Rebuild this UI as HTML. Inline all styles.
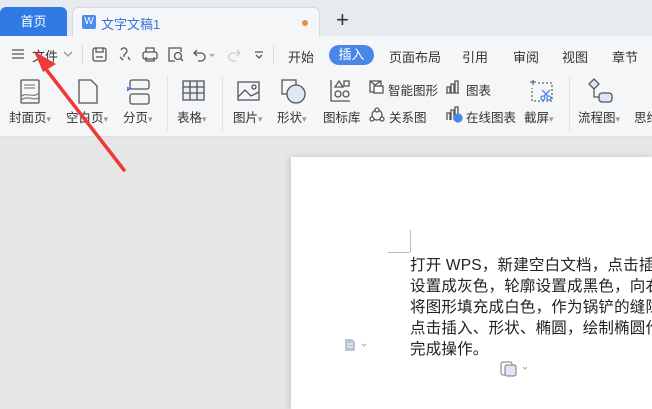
<!DOCTYPE html>
<html><head><meta charset="utf-8"><style>
*{margin:0;padding:0;box-sizing:border-box}
body{width:652px;height:409px;overflow:hidden;background:#e6e6e6;font-family:"Liberation Sans","Noto Sans CJK SC",sans-serif;position:relative;font-size:12px;color:#333}
.abs{position:absolute}
#tabs{left:0;top:0;width:652px;height:36px;background:#e7eaee}
#home{left:0;top:7px;width:67px;height:29px;background:#2f7ae5;color:#fff;border-radius:6px 6px 0 0;text-align:center;line-height:29px;font-size:13px}
#doc{left:72px;top:7px;width:248px;height:30px;background:#f5f6f8;border:1px solid #d6d9de;border-bottom:none;border-radius:6px 6px 0 0}
#tool{left:0;top:36px;width:652px;height:101px;background:#f5f6f8;border-bottom:1px solid #e0e0e0}
.t{position:absolute;white-space:nowrap}
.ic{position:absolute;fill:none;stroke-width:1.3}
#page{left:291px;top:157px;width:361px;height:252px;background:#fff;box-shadow:-2px 0 6px rgba(0,0,0,.12)}
.line{position:absolute;left:410px;font-size:15.5px;color:#222;white-space:nowrap;letter-spacing:0.2px}
</style></head><body>
<div id="tabs" class="abs"></div>
<div id="home" class="abs">首页</div>
<div id="doc" class="abs">
 <div class="abs" style="left:9px;top:7px;width:14px;height:14px;background:#4a8cf0;border-radius:2px;color:#fff;font-size:10px;text-align:center;line-height:14px">W</div>
 <div class="t" style="left:28px;top:6px;font-size:13px;color:#3a72d8">文字文稿1</div>
 <div class="abs" style="left:229px;top:12px;width:6px;height:6px;border-radius:50%;background:#e8903e"></div>
</div>
<div class="t" style="left:336px;top:7px;font-size:22px;color:#333;font-weight:300">+</div>
<div id="tool" class="abs"></div>
<!-- row 1 -->
<svg class="ic" style="left:11px;top:48px;stroke:#555" width="14" height="12"><path d="M1 2H13M1 6H13M1 10H13"/></svg>
<div class="t" style="left:32px;top:46px;font-size:13px">文件</div>
<svg class="ic" style="left:63px;top:50px;stroke:#999" width="10" height="8"><path d="M1 2L5 6L9 2"/></svg>
<div class="abs" style="left:82px;top:45px;width:1px;height:20px;background:#ddd"></div>
<svg class="ic" style="left:92px;top:47px;stroke:#555" width="15" height="15"><rect x="1" y="1" width="13" height="13" rx="2"/><path d="M4 1V5H11V1M4 10H11"/></svg>
<svg class="ic" style="left:117px;top:47px;stroke:#555" width="15" height="15"><path d="M4 3A3 3 0 1 1 9 6L7 8V10M3 10L6 13M11 10L13 13"/></svg>
<svg class="ic" style="left:142px;top:47px;stroke:#555" width="16" height="15"><rect x="1" y="5" width="14" height="7" rx="2"/><path d="M4 5V1H12V5M4 10V14H12V10"/></svg>
<svg class="ic" style="left:168px;top:47px;stroke:#555" width="16" height="15"><path d="M13 5V1H1V14H7"/><circle cx="10" cy="9" r="3.5"/><path d="M12.5 11.5L15 14"/></svg>
<svg class="ic" style="left:193px;top:48px;stroke:#555" width="22" height="14"><path d="M4 2L1 5L4 8M1 5H8A4 4 0 0 1 8 13H5"/><path d="M17 6L19 8L21 6" style="stroke:#999"/></svg>
<svg class="ic" style="left:227px;top:48px;stroke:#ccc" width="14" height="14"><path d="M10 2L13 5L10 8M13 5H6A4 4 0 0 0 6 13H9"/></svg>
<svg class="ic" style="left:254px;top:50px;stroke:#555" width="10" height="10"><path d="M1 2H9M2 5L5 8L8 5"/></svg>
<div class="abs" style="left:273px;top:45px;width:1px;height:20px;background:#ddd"></div>
<div class="t" style="left:288px;top:47px;font-size:13px">开始</div>
<div class="abs" style="left:329px;top:45px;width:45px;height:20px;border-radius:10px;background:#4a86e8;color:#fff;font-size:13px;text-align:center;line-height:20px">插入</div>
<div class="t" style="left:389px;top:47px;font-size:13px">页面布局</div>
<div class="t" style="left:462px;top:47px;font-size:13px">引用</div>
<div class="t" style="left:513px;top:47px;font-size:13px">审阅</div>
<div class="t" style="left:562px;top:47px;font-size:13px">视图</div>
<div class="t" style="left:612px;top:47px;font-size:13px">章节</div>
<!-- row 2 icons -->
<svg class="ic" style="left:20px;top:79px;stroke:#555" width="22" height="26"><rect x="1" y="1" width="18" height="23" rx="1"/><path d="M4 6H15M4 9H15M1 18C6 12 12 20 19 14M1 21C8 16 12 22 19 19" style="stroke:#888"/></svg>
<svg class="ic" style="left:78px;top:79px;stroke:#555" width="20" height="26"><path d="M1 1H13L19 7V24H1Z"/></svg>
<svg class="ic" style="left:127px;top:79px;stroke:#555" width="24" height="26"><rect x="3" y="1" width="19" height="9" rx="2"/><rect x="3" y="15" width="19" height="10" rx="2"/><path d="M0 8L3 10L0 12" style="fill:#4a86e8;stroke:#4a86e8"/></svg>
<div class="abs" style="left:167px;top:76px;width:1px;height:55px;background:#e3e3e3"></div>
<svg class="ic" style="left:182px;top:80px;stroke:#555" width="24" height="22"><rect x="1" y="1" width="21" height="19" style="fill:#e8eefa"/><path d="M1 7H22M1 13H22M8 1V20M15 1V20"/></svg>
<div class="abs" style="left:222px;top:76px;width:1px;height:55px;background:#e3e3e3"></div>
<svg class="ic" style="left:237px;top:81px;stroke:#555" width="24" height="21"><rect x="1" y="1" width="21" height="18" style="fill:#f3f5fa"/><path d="M1 16L8 9L14 15L22 11"/><circle cx="17" cy="6" r="2"/></svg>
<svg class="ic" style="left:281px;top:79px;stroke:#555" width="26" height="26"><rect x="1" y="1" width="14" height="14"/><circle cx="15" cy="15" r="9" style="fill:#dde7f8"/></svg>
<svg class="ic" style="left:330px;top:79px;stroke:#555" width="22" height="24"><path d="M1 1V22H20"/><path d="M9 2L13 8H5Z M14 2H19V7H14Z"/><circle cx="8" cy="15" r="3"/><circle cx="16" cy="15" r="3"/></svg>
<svg class="ic" style="left:369px;top:80px;stroke:#555" width="16" height="14"><path d="M1 1H12V12H1Z M1 1L6 5L12 1"/><rect x="5" y="6" width="9" height="7" style="fill:#fff"/></svg>
<div class="t" style="left:388px;top:80px;font-size:12.5px">智能图形</div>
<svg class="ic" style="left:446px;top:80px;stroke:#555" width="14" height="14"><path d="M1 13V7H4V13M5 13V4H8V13M9 13V1H12V13M0 13H13"/></svg>
<div class="t" style="left:466px;top:80px;font-size:12.5px">图表</div>
<svg class="ic" style="left:528px;top:79px;stroke:#666" width="26" height="24"><path d="M5 1V6M2 3H8" /><path d="M10 4H24V22H4V9" stroke-dasharray="2 2"/><circle cx="15" cy="19" r="2" style="stroke:#4a86e8"/><circle cx="21" cy="19" r="2" style="stroke:#4a86e8"/><path d="M14 11L20 17M22 11L16 17" style="stroke:#4a86e8"/></svg>
<div class="abs" style="left:569px;top:76px;width:1px;height:55px;background:#e3e3e3"></div>
<svg class="ic" style="left:588px;top:78px;stroke:#555" width="26" height="26"><path d="M1 6L6 1L11 6L6 11Z" style="fill:#dde7f8"/><path d="M6 11V19H11"/><rect x="11" y="15" width="13" height="9" rx="3" style="fill:#dde7f8"/></svg>
<!-- row 2 labels -->
<div class="t" style="left:9px;top:107px;font-size:12.5px">封面页<span style="color:#999;font-size:9px">▾</span></div>
<div class="t" style="left:66px;top:107px;font-size:12.5px">空白页<span style="color:#999;font-size:9px">▾</span></div>
<div class="t" style="left:123px;top:107px;font-size:12.5px">分页<span style="color:#999;font-size:9px">▾</span></div>
<div class="t" style="left:177px;top:107px;font-size:12.5px">表格<span style="color:#999;font-size:9px">▾</span></div>
<div class="t" style="left:233px;top:107px;font-size:12.5px">图片<span style="color:#999;font-size:9px">▾</span></div>
<div class="t" style="left:277px;top:107px;font-size:12.5px">形状<span style="color:#999;font-size:9px">▾</span></div>
<div class="t" style="left:323px;top:107px;font-size:12.5px">图标库</div>
<svg class="ic" style="left:369px;top:107px;stroke:#555" width="16" height="15"><circle cx="8" cy="8" r="5"/><circle cx="8" cy="3" r="2" style="fill:#fff"/><circle cx="3" cy="12" r="2" style="fill:#fff"/><circle cx="13" cy="12" r="2" style="fill:#fff"/></svg>
<div class="t" style="left:389px;top:107px;font-size:12.5px">关系图</div>
<svg class="ic" style="left:446px;top:106px;stroke:#555" width="17" height="17"><path d="M1 14V7H4V14M5 14V4H8V14M9 10V1H12V8"/><circle cx="12" cy="12" r="4" style="fill:#4a86e8;stroke:#4a86e8"/></svg>
<div class="t" style="left:466px;top:107px;font-size:12.5px">在线图表</div>
<div class="t" style="left:524px;top:107px;font-size:12.5px">截屏<span style="color:#999;font-size:9px">▾</span></div>
<div class="t" style="left:578px;top:107px;font-size:12.5px">流程图<span style="color:#999;font-size:9px">▾</span></div>
<div class="t" style="left:634px;top:107px;font-size:12.5px">思维</div>
<!-- page -->
<div id="page" class="abs"></div>
<div class="abs" style="left:410px;top:230px;width:1px;height:22px;background:#bbb"></div>
<div class="abs" style="left:388px;top:252px;width:22px;height:1px;background:#bbb"></div>
<div class="line" style="top:253px">打开 WPS，新建空白文档，点击插入</div>
<div class="line" style="top:274px">设置成灰色，轮廓设置成黑色，向右</div>
<div class="line" style="top:295px">将图形填充成白色，作为锅铲的缝隙</div>
<div class="line" style="top:316px">点击插入、形状、椭圆，绘制椭圆作为</div>
<div class="line" style="top:337px">完成操作。</div>
<svg class="abs" style="left:344px;top:338px" width="24" height="14"><path d="M1 1H8L11 4V13H1Z" fill="#b8c4d6"/><path d="M3 6H9M3 9H9" stroke="#fff"/><path d="M18 6L20 8L22 6" stroke="#aaa" fill="none"/></svg>
<svg class="abs" style="left:500px;top:359px" width="30" height="18"><rect x="1" y="3" width="11" height="13" rx="2" fill="none" stroke="#777"/><rect x="5" y="6" width="11" height="11" rx="2" fill="#dde7f8" stroke="#777"/><path d="M23 8L25 10L27 8" stroke="#aaa" fill="none"/></svg>
<!-- arrow -->
<svg class="abs" style="left:0;top:0" width="652" height="409"><path d="M124 170L42 64" stroke="#ee3a36" stroke-width="3.5" stroke-linecap="round"/><path d="M34 51L56 64L43 72Z" fill="#ee3a36"/></svg>
</body></html>
